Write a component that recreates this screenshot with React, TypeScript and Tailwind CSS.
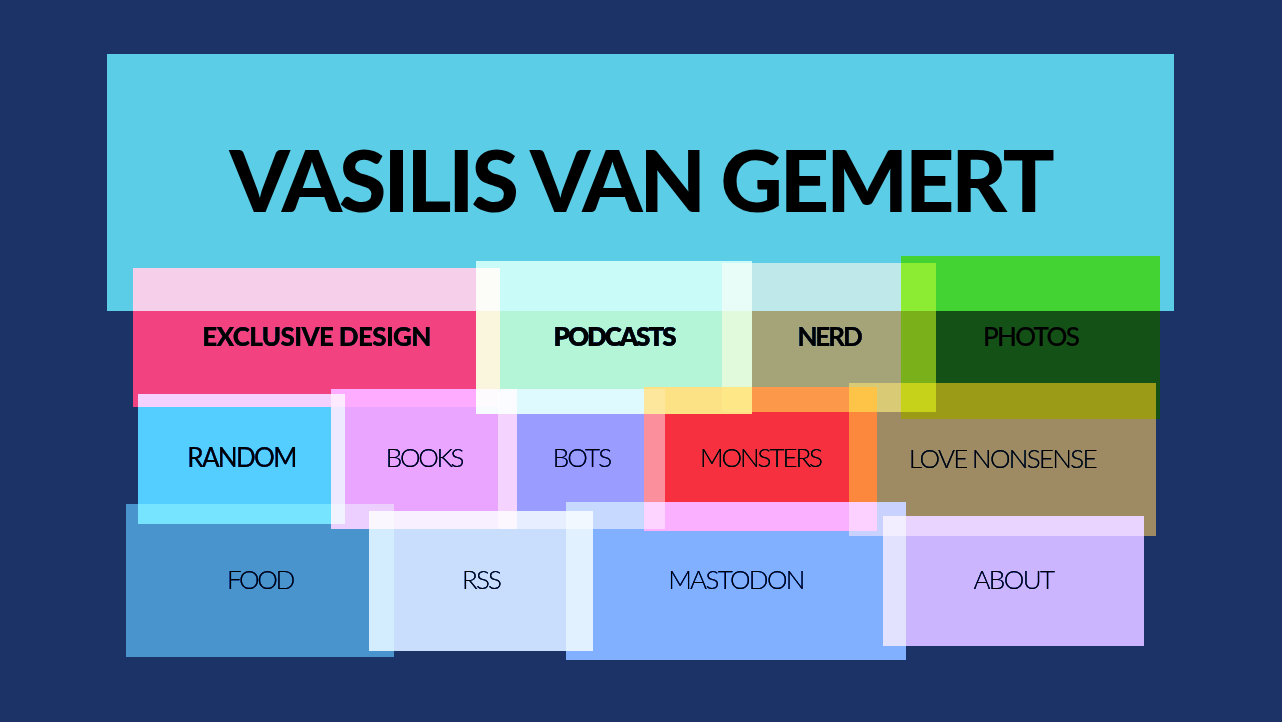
const rows = [
  {
    mt: "mt-[-55px]",
    h: "h-[163px]",
    items: [
      { label: "EXCLUSIVE DESIGN", box: "ml-[26px] mt-[12px] w-[367px] h-[139px] bg-[#f88994]", text: "font-black tracking-[-0.025em]" },
      { label: "PODCASTS", box: "ml-[-24px] mt-[5px] w-[276px] h-[153px] bg-[#d5f9de]", text: "font-extrabold tracking-[-0.08em]" },
      { label: "NERD", box: "ml-[-30px] mt-[7px] w-[214px] h-[149px] bg-[#cdc68f]", text: "font-bold tracking-[-0.08em]" },
      { label: "PHOTOS", box: "ml-[-35px] mt-0 w-[259px] h-[163px] bg-[#5e921c]", text: "font-medium tracking-[-0.065em]" },
    ],
  },
  {
    mt: "mt-[-36px]",
    h: "h-[153px]",
    items: [
      { label: "RANDOM", box: "ml-[31px] mt-[11px] w-[207px] h-[130px] bg-[#9fe0ff]", text: "font-normal tracking-[-0.065em]" },
      { label: "BOOKS", box: "ml-[-14px] mt-[6px] w-[186px] h-[140px] bg-[#f3c7ff]", text: "font-light tracking-[-0.09em]" },
      { label: "BOTS", box: "ml-[-19px] mt-[6px] w-[167px] h-[140px] bg-[#c7c1ff]", text: "font-light tracking-[-0.07em]" },
      { label: "MONSTERS", box: "ml-[-21px] mt-[4px] w-[233px] h-[144px] bg-[#fa764e]", text: "font-light tracking-[-0.08em]" },
      { label: "LOVE NONSENSE", box: "ml-[-28px] mt-0 w-[307px] h-[153px] bg-[#c9b67b]", text: "font-light tracking-[-0.065em]" },
    ],
  },
  {
    mt: "mt-[-34px]",
    h: "h-[158px]",
    items: [
      { label: "FOOD", box: "ml-[19px] mt-[2px] w-[268px] h-[153px] bg-[#99bcd5]", text: "font-light tracking-[-0.09em]" },
      { label: "RSS", box: "ml-[-25px] mt-[9px] w-[224px] h-[140px] bg-[#e1eafd]", text: "font-light tracking-[-0.075em]" },
      { label: "MASTODON", box: "ml-[-27px] mt-0 w-[340px] h-[158px] bg-[#b8ceff]", text: "font-light tracking-[-0.065em]" },
      { label: "ABOUT", box: "ml-[-23px] mt-[14px] w-[261px] h-[130px] bg-[#e2d1ff]", text: "font-light tracking-[-0.06em]" },
    ],
  },
];

export default function App() {
  return (
    <div className="min-h-screen bg-[#1b3366] pt-[54px] font-['Lato','Inter',sans-serif] text-black">
      <div className="ml-[107px] w-[1067px]">
        <header className="flex h-[257px] items-center justify-center bg-[#5bcde6] pb-[8px]">
          <h1 className="text-[86px] font-black leading-none tracking-[-0.035em]">
            VASILIS VAN GEMERT
          </h1>
        </header>

        <nav aria-label="Topics">
          {rows.map((row, i) => (
            <div key={i} className={`flex items-start ${row.mt} ${row.h}`}>
              {row.items.map((item) => (
                <a
                  key={item.label}
                  href="#"
                  className={`flex shrink-0 items-center justify-center pb-[4px] mix-blend-hard-light text-[26px] leading-none ${item.box} ${item.text}`}
                >
                  {item.label}
                </a>
              ))}
            </div>
          ))}
        </nav>
      </div>
    </div>
  );
}
